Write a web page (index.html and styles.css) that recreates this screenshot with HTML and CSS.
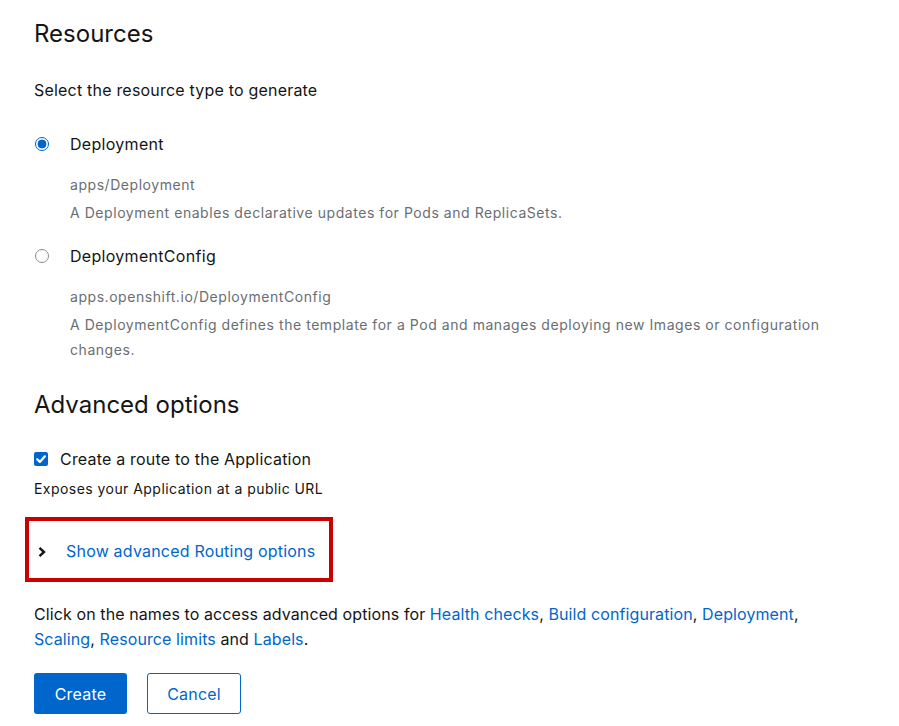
FILE: index.html
```html
<!DOCTYPE html>
<html>
<head>
<meta charset="utf-8">
<link rel="stylesheet" href="styles.css">
</head>
<body>
<main class="page">
  <h2 class="title">Resources</h2>
  <p class="lead">Select the resource type to generate</p>

  <div class="radio-item">
    <label class="choice">
      <span class="radio checked"></span>
      <span class="choice-label">Deployment</span>
    </label>
    <div class="helper">
      <div class="helper-api">apps/Deployment</div>
      <div class="helper-desc">A Deployment enables declarative updates for Pods and ReplicaSets.</div>
    </div>
  </div>

  <div class="radio-item second">
    <label class="choice">
      <span class="radio"></span>
      <span class="choice-label">DeploymentConfig</span>
    </label>
    <div class="helper">
      <div class="helper-api">apps.openshift.io/DeploymentConfig</div>
      <div class="helper-desc">A DeploymentConfig defines the template for a Pod and manages deploying new Images or configuration changes.</div>
    </div>
  </div>

  <h2 class="title advanced">Advanced options</h2>

  <label class="check-row">
    <span class="checkbox">
      <svg viewBox="0 0 14 14" width="14" height="14"><path d="M3.2 7.2 L5.9 9.9 L10.9 4.3" fill="none" stroke="#fff" stroke-width="2.2" stroke-linecap="round" stroke-linejoin="round"/></svg>
    </span>
    <span class="check-label">Create a route to the Application</span>
  </label>
  <div class="check-desc">Exposes your Application at a public URL</div>

  <div class="highlight">
    <button class="expand">
      <svg class="chevron" viewBox="0 0 10 12" width="10" height="12"><path d="M2.5 1.8 L7 6 L2.5 10.2" fill="none" stroke="#151515" stroke-width="2.4" stroke-linejoin="miter"/></svg>
      <span class="expand-text">Show advanced Routing options</span>
    </button>
  </div>

  <p class="links">Click on the names to access advanced options for <a href="#">Health checks</a>, <a href="#">Build configuration</a>, <a href="#">Deployment</a>, <a href="#">Scaling</a>, <a href="#">Resource limits</a> and <a href="#">Labels</a>.</p>

  <div class="actions">
    <button class="btn primary">Create</button>
    <button class="btn secondary">Cancel</button>
  </div>
</main>
</body>
</html>
```
FILE: styles.css
```css
* { box-sizing: border-box; }
html, body { margin: 0; padding: 0; background: #fff; }
body {
  font-family: "Inter", "Noto Sans", sans-serif;
  color: #151515;
  font-size: 16px;
  letter-spacing: 0.2px;
}
.page {
  padding: 19px 20px 0 34px;
  width: 860px;
}
.title {
  margin: 0;
  font-size: 24px;
  font-weight: 400;
  line-height: 30px;
  letter-spacing: 0;
}
.lead {
  margin: 29px 0 0;
  line-height: 24px;
}
.radio-item { margin-top: 30px; }
.radio-item.second { margin-top: 19px; }
.choice {
  display: flex;
  align-items: center;
  line-height: 24px;
}
.choice-label { letter-spacing: 0.3px; }
.radio {
  width: 14px;
  height: 14px;
  border: 1px solid #8a8d90;
  border-radius: 50%;
  margin-left: 1px;
  margin-right: 21px;
  flex: none;
  background: #fff;
}
.radio.checked {
  border: 1.5px solid #06c;
  background: radial-gradient(circle, #06c 0 4.2px, #fff 4.7px);
}
.helper {
  padding-left: 36px;
  margin-top: 16px;
  font-size: 14px;
  line-height: 25px;
  color: #6a6e73;
  letter-spacing: 0.55px;
}
.helper-desc { margin-top: 3px; }
.advanced { margin-top: 28px; }
.check-row {
  display: flex;
  align-items: center;
  margin-top: 27px;
  line-height: 24px;
}
.checkbox {
  width: 14px;
  height: 14px;
  background: #06c;
  border-radius: 2px;
  margin-right: 12px;
  display: flex;
  flex: none;
}
.check-desc {
  margin-top: 5px;
  font-size: 14px;
  line-height: 25px;
  letter-spacing: 0.45px;
}
.highlight {
  margin: 16px 0 0 -9px;
  width: 308px;
  height: 65px;
  border: 4px solid #c80000;
  display: flex;
  align-items: center;
  padding-left: 8px;
}
.expand {
  display: flex;
  align-items: center;
  background: none;
  border: 0;
  padding: 0;
  font: inherit;
  letter-spacing: 0.2px;
  color: #06c;
  cursor: pointer;
  margin-top: 3px;
}
.chevron { margin-right: 19px; margin-top: 1px; }
.expand-text { line-height: 24px; }
.links {
  margin: 20px 0 0;
  line-height: 25px;
  width: 800px;
  letter-spacing: 0.1px;
}
.links a { color: #06c; text-decoration: none; }
.actions {
  display: flex;
  gap: 20px;
  margin-top: 21px;
}
.btn {
  font: inherit;
  letter-spacing: 0.2px;
  height: 41px;
  border-radius: 3px;
  padding: 0;
  cursor: pointer;
}
.primary {
  width: 93px;
  background: #06c;
  color: #fff;
  border: 0;
}
.secondary {
  width: 94px;
  background: #fff;
  color: #06c;
  border: 1px solid #06c;
}
```
